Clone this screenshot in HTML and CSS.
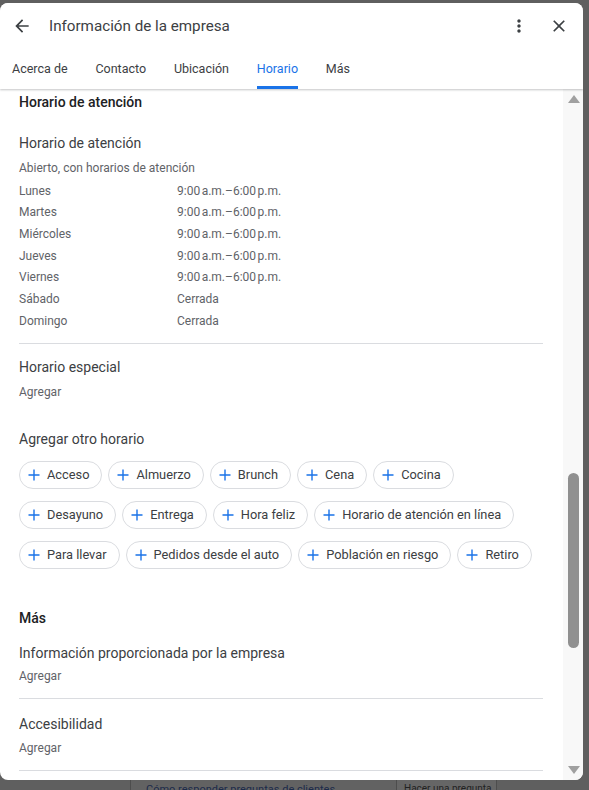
FILE: index.html
```html
<!DOCTYPE html>
<html lang="es">
<head>
  <meta charset="UTF-8" />
  <meta name="viewport" content="width=device-width, initial-scale=1.0"/>
  <title>Información de la empresa</title>
  <link rel="stylesheet" href="styles.css">
</head>
<body>

  <div class="dialog">
    <header class="dialog-header">
      <div class="title-row">
        <span class="icon-btn back">
          <svg viewBox="0 0 24 24" width="20" height="20"><path d="M20 11H7.83l5.59-5.59L12 4l-8 8 8 8 1.41-1.41L7.83 13H20v-2z"/></svg>
        </span>
        <h1 class="title">Información de la empresa</h1>
        <span class="icon-btn">
          <svg viewBox="0 0 24 24" width="20" height="20"><path d="M12 8c1.1 0 2-.9 2-2s-.9-2-2-2-2 .9-2 2 .9 2 2 2zm0 2c-1.1 0-2 .9-2 2s.9 2 2 2 2-.9 2-2-.9-2-2-2zm0 6c-1.1 0-2 .9-2 2s.9 2 2 2 2-.9 2-2-.9-2-2-2z"/></svg>
        </span>
        <span class="icon-btn">
          <svg viewBox="0 0 24 24" width="20" height="20"><path d="M19 6.41L17.59 5 12 10.59 6.41 5 5 6.41 10.59 12 5 17.59 6.41 19 12 13.41 17.59 19 19 17.59 13.41 12z"/></svg>
        </span>
      </div>
      <nav class="tabs">
        <span class="tab">Acerca de</span>
        <span class="tab">Contacto</span>
        <span class="tab">Ubicación</span>
        <span class="tab active">Horario</span>
        <span class="tab">Más</span>
      </nav>
    </header>

    <div class="dialog-body">
      <div class="content">
        <h2 class="section-title">Horario de atención</h2>

        <div class="field hours-field">
          <div class="field-label">Horario de atención</div>
          <div class="field-value">Abierto, con horarios de atención</div>
          <div class="hours">
            <span>Lunes</span><span>9:00&#8239;a.m.–6:00&#8239;p.m.</span>
            <span>Martes</span><span>9:00&#8239;a.m.–6:00&#8239;p.m.</span>
            <span>Miércoles</span><span>9:00&#8239;a.m.–6:00&#8239;p.m.</span>
            <span>Jueves</span><span>9:00&#8239;a.m.–6:00&#8239;p.m.</span>
            <span>Viernes</span><span>9:00&#8239;a.m.–6:00&#8239;p.m.</span>
            <span>Sábado</span><span>Cerrada</span>
            <span>Domingo</span><span>Cerrada</span>
          </div>
        </div>

        <hr class="divider">

        <div class="field first">
          <div class="field-label">Horario especial</div>
          <div class="field-value">Agregar</div>
        </div>

        <div class="field other-hours">
          <div class="field-label">Agregar otro horario</div>
          <div class="chips">
            <span class="chip"><svg viewBox="0 0 12 12"><path d="M6 0.5v11M0.5 6h11"/></svg>Acceso</span>
            <span class="chip"><svg viewBox="0 0 12 12"><path d="M6 0.5v11M0.5 6h11"/></svg>Almuerzo</span>
            <span class="chip"><svg viewBox="0 0 12 12"><path d="M6 0.5v11M0.5 6h11"/></svg>Brunch</span>
            <span class="chip"><svg viewBox="0 0 12 12"><path d="M6 0.5v11M0.5 6h11"/></svg>Cena</span>
            <span class="chip"><svg viewBox="0 0 12 12"><path d="M6 0.5v11M0.5 6h11"/></svg>Cocina</span>
            <span class="chip"><svg viewBox="0 0 12 12"><path d="M6 0.5v11M0.5 6h11"/></svg>Desayuno</span>
            <span class="chip"><svg viewBox="0 0 12 12"><path d="M6 0.5v11M0.5 6h11"/></svg>Entrega</span>
            <span class="chip"><svg viewBox="0 0 12 12"><path d="M6 0.5v11M0.5 6h11"/></svg>Hora feliz</span>
            <span class="chip"><svg viewBox="0 0 12 12"><path d="M6 0.5v11M0.5 6h11"/></svg>Horario de atención en línea</span>
            <span class="chip"><svg viewBox="0 0 12 12"><path d="M6 0.5v11M0.5 6h11"/></svg>Para llevar</span>
            <span class="chip"><svg viewBox="0 0 12 12"><path d="M6 0.5v11M0.5 6h11"/></svg>Pedidos desde el auto</span>
            <span class="chip"><svg viewBox="0 0 12 12"><path d="M6 0.5v11M0.5 6h11"/></svg>Población en riesgo</span>
            <span class="chip"><svg viewBox="0 0 12 12"><path d="M6 0.5v11M0.5 6h11"/></svg>Retiro</span>
          </div>
        </div>

        <h2 class="section-title more-title">Más</h2>

        <div class="field after-title">
          <div class="field-label">Información proporcionada por la empresa</div>
          <div class="field-value">Agregar</div>
        </div>

        <hr class="divider">

        <div class="field first last">
          <div class="field-label">Accesibilidad</div>
          <div class="field-value">Agregar</div>
        </div>

        <hr class="divider">
      </div>

      <div class="scrollbar">
        <span class="arrow up"></span>
        <div class="track"><span class="thumb"></span></div>
        <span class="arrow down"></span>
      </div>
    </div>
  </div>

  <div class="page-behind">
    <div class="bg-card">
      <span class="bg-text">Cómo responder preguntas de clientes</span>
    </div>
    <div class="bg-btn">Hacer una pregunta</div>
  </div>

</body>
</html>
```

FILE: styles.css
```css
* {
  box-sizing: border-box;
  margin: 0;
  padding: 0;
}

body {
  background: #5f5f5f;
  font-family: Roboto, "Noto Sans", Arial, sans-serif;
  width: 589px;
  height: 790px;
  overflow: hidden;
}

.dialog {
  margin-top: 3px;
  width: 583px;
  height: 777px;
  background: #fff;
  border-radius: 8px;
  display: flex;
  flex-direction: column;
  overflow: hidden;
}

/* cabecera */

.dialog-header {
  position: relative;
  z-index: 1;
  background: #fff;
  box-shadow: 0 1px 2px rgba(60,64,67,0.3);
}

.title-row {
  height: 45px;
  display: flex;
  align-items: center;
  padding: 0 14px 0 12px;
}

.icon-btn {
  width: 20px;
  height: 20px;
  display: flex;
  fill: #3c4043;
}

.icon-btn + .icon-btn {
  margin-left: 20px;
}

.title {
  flex: 1;
  margin-left: 17px;
  font-size: 15.2px;
  font-weight: 400;
  color: #3c4043;
}

.tabs {
  height: 41px;
  display: flex;
  gap: 27.8px;
  padding-left: 12px;
}

.tab {
  display: flex;
  align-items: center;
  padding-top: 3px;
  border-bottom: 3px solid transparent;
  font-size: 12.5px;
  color: #3c4043;
}

.tab.active {
  color: #1a73e8;
  border-bottom-color: #1a73e8;
}

/* cuerpo */

.dialog-body {
  flex: 1;
  min-height: 0;
  display: flex;
}

.content {
  flex: 1;
  overflow: hidden;
  padding: 3px 20px 0 19px;
}

.section-title {
  font-size: 14px;
  line-height: 20px;
  font-weight: 500;
  color: #202124;
}

.field-label {
  font-size: 14px;
  line-height: 20px;
  color: #3c4043;
}

.field-value {
  margin-top: 3.5px;
  font-size: 12px;
  line-height: 20px;
  color: #5f6368;
}

.hours-field {
  margin-top: 21px;
}

.hours-field .field-value {
  margin-top: 5px;
}

.hours {
  margin-top: 2px;
  display: grid;
  grid-template-columns: 158px 1fr;
  grid-auto-rows: 21.67px;
  align-items: center;
  font-size: 12px;
  color: #5f6368;
}

.divider {
  border: none;
  border-top: 1px solid #dadce0;
  margin-top: 12px;
}

.hours-field + .divider {
  margin-top: 11px;
}

.field.first {
  margin-top: 13px;
}

.field.first .field-value {
  margin-top: 5px;
}

.field.last {
  margin-top: 15px;
}

.field.last .field-value {
  margin-top: 3.5px;
}

.other-hours {
  margin-top: 27px;
}

.chips {
  margin-top: 12px;
  display: flex;
  flex-wrap: wrap;
  gap: 12px 6px;
}

.chip {
  height: 28px;
  display: inline-flex;
  align-items: center;
  gap: 7px;
  padding: 0 12px 0 8px;
  border: 1px solid #dadce0;
  border-radius: 14px;
  font-size: 12.8px;
  color: #3c4043;
}

.chip svg {
  width: 12px;
  height: 12px;
  stroke: #1a73e8;
  stroke-width: 1.4;
  fill: none;
}

.more-title {
  margin-top: 39px;
}

.after-title {
  margin-top: 15px;
}

/* barra de desplazamiento */

.scrollbar {
  width: 20px;
  background: #f8f8f8;
  display: flex;
  flex-direction: column;
  align-items: center;
  padding: 6px 0 6px 1px;
}

.arrow {
  width: 0;
  height: 0;
  border-left: 6px solid transparent;
  border-right: 6px solid transparent;
}

.arrow.up {
  border-bottom: 8px solid #a0a0a0;
}

.arrow.down {
  border-top: 8px solid #a0a0a0;
}

.track {
  flex: 1;
  display: flex;
  flex-direction: column;
  align-items: center;
}

.thumb {
  margin-top: 370px;
  width: 11px;
  height: 175px;
  border-radius: 6px;
  background: #909090;
}

/* página detrás del diálogo */

.page-behind {
  height: 10px;
  display: flex;
  overflow: hidden;
}

.bg-card {
  margin-left: 130px;
  width: 267px;
  border-left: 1px solid #4d4d4d;
  border-right: 1px solid #4d4d4d;
  background: #626262;
  padding-left: 15px;
}

.bg-text {
  display: block;
  margin-top: 3px;
  font-size: 11px;
  color: #1c2a4a;
}

.bg-btn {
  width: 100px;
  background: #666;
  border-right: 1px solid #4d4d4d;
  padding: 3px 0 0 7px;
  font-size: 10px;
  color: #222;
  white-space: nowrap;
}
```
